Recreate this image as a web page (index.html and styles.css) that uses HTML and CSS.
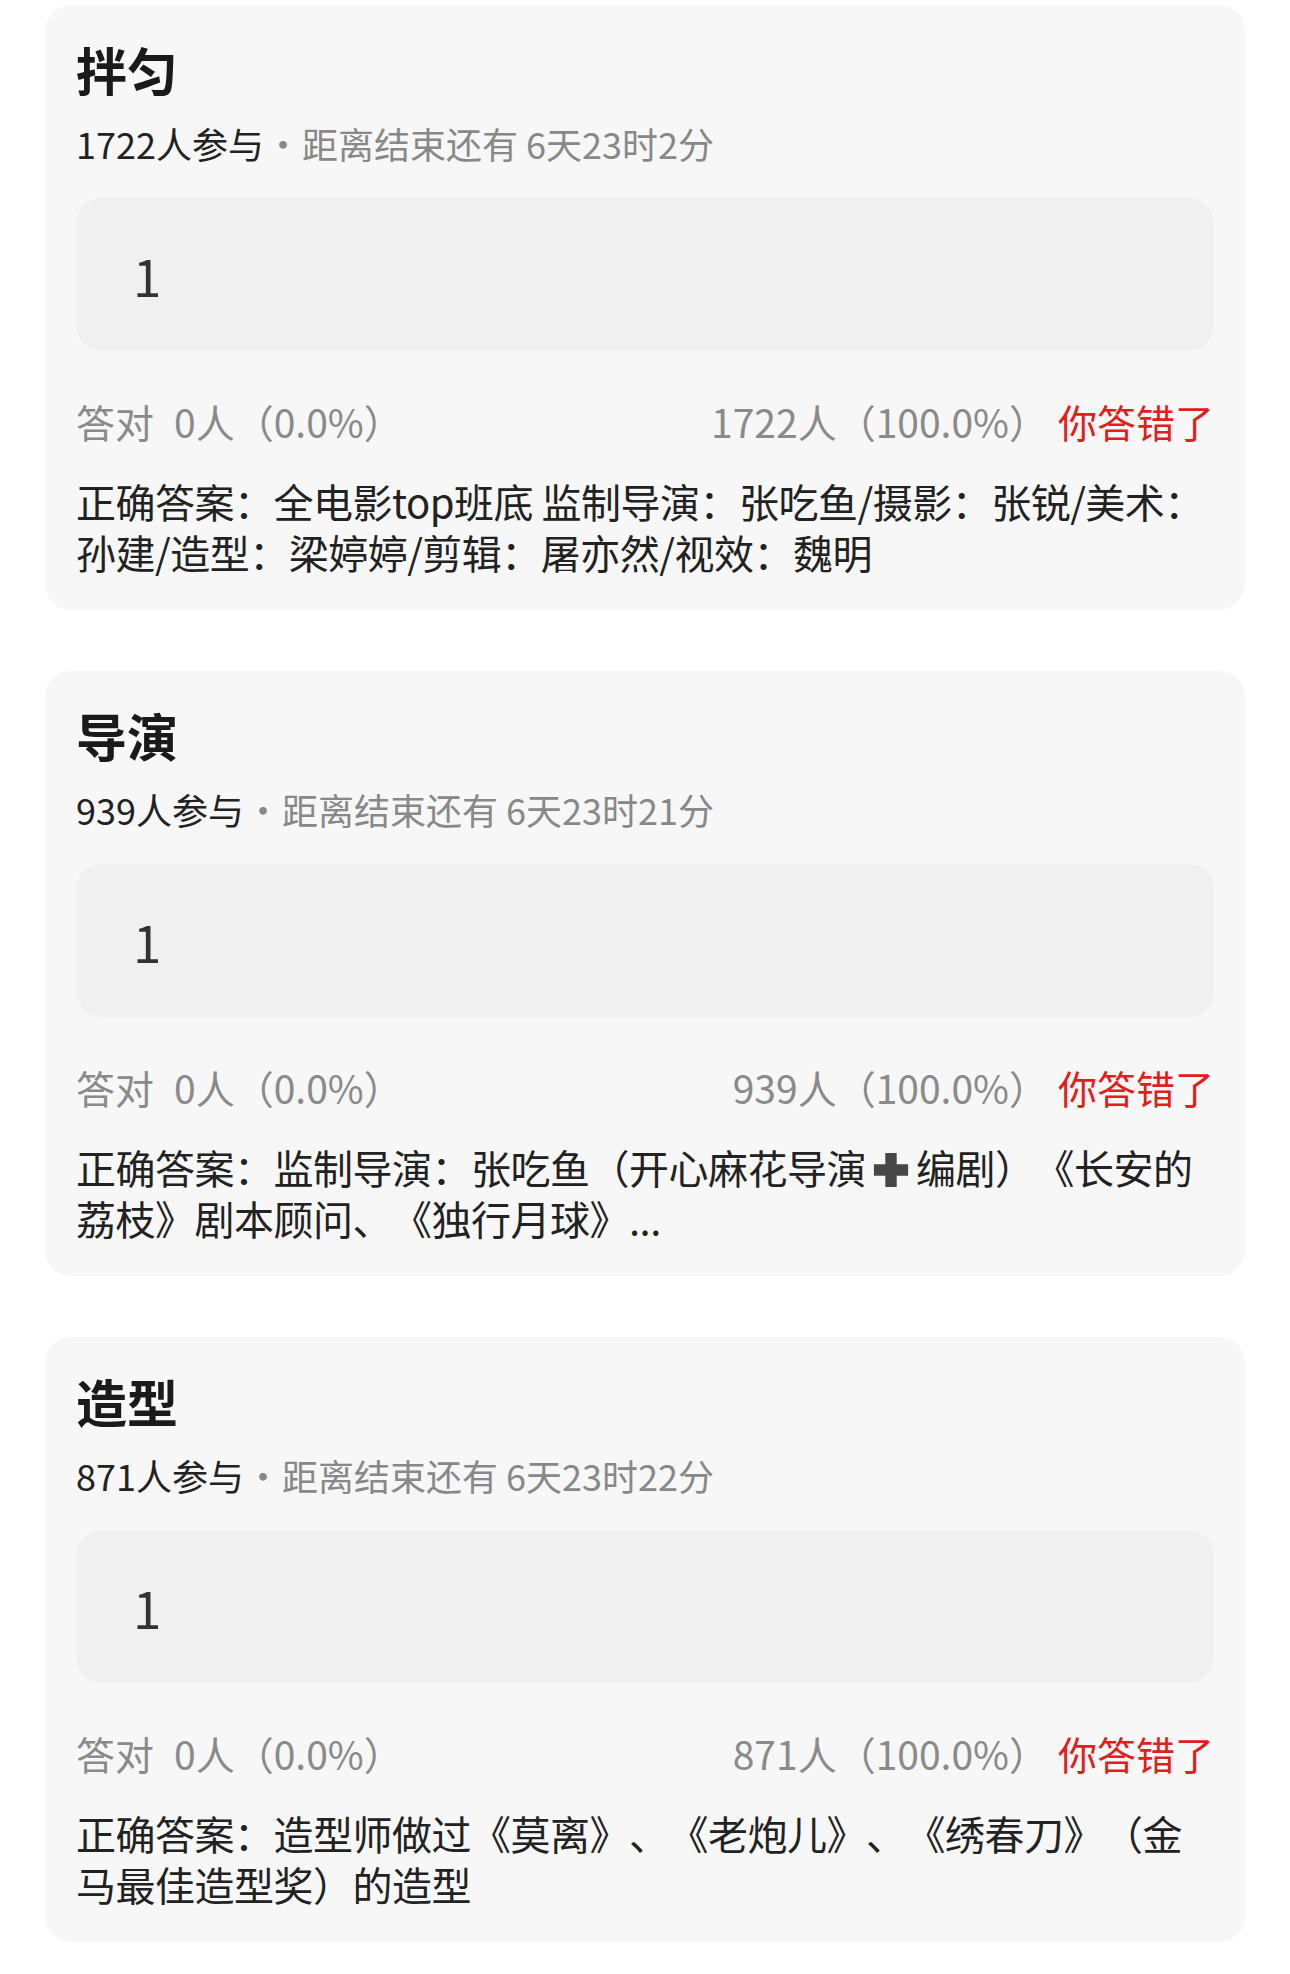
FILE: index.html
```html
<!DOCTYPE html>
<html lang="zh-CN">
<head>
    <meta charset="UTF-8">
    <meta name="viewport" content="width=device-width, initial-scale=1.0">
    <title>竞猜结果</title>
    <link rel="stylesheet" href="styles.css">
</head>
<body>
    <div class="quiz-list">
        <!-- 拌匀 -->
        <div class="quiz-card">
            <h2 class="quiz-title">拌匀</h2>
            <div class="quiz-meta">
                <span class="joined">1722人参与</span><span class="dot">·</span><span>距离结束还有 6天23时2分</span>
            </div>
            <div class="answer-box">1</div>
            <div class="stats">
                <div class="stats-left"><span>答对</span><span>0人（0.0%）</span></div>
                <div class="stats-right"><span>1722人（100.0%）</span><span class="wrong">你答错了</span></div>
            </div>
            <p class="correct">正确答案：全电影top班底 监制导演：张吃鱼/摄影：张锐/美术：孙建/造型：梁婷婷/剪辑：屠亦然/视效：魏明</p>
        </div>

        <!-- 导演 -->
        <div class="quiz-card">
            <h2 class="quiz-title">导演</h2>
            <div class="quiz-meta">
                <span class="joined">939人参与</span><span class="dot">·</span><span>距离结束还有 6天23时21分</span>
            </div>
            <div class="answer-box">1</div>
            <div class="stats">
                <div class="stats-left"><span>答对</span><span>0人（0.0%）</span></div>
                <div class="stats-right"><span>939人（100.0%）</span><span class="wrong">你答错了</span></div>
            </div>
            <p class="correct">正确答案：监制导演：张吃鱼（开心麻花导演<svg class="plus" viewBox="0 0 40 40"><path d="M14 2h12v12h12v12H26v12H14V26H2V14h12z"/></svg>编剧）《长安的荔枝》剧本顾问、《独行月球》...</p>
        </div>

        <!-- 造型 -->
        <div class="quiz-card">
            <h2 class="quiz-title">造型</h2>
            <div class="quiz-meta">
                <span class="joined">871人参与</span><span class="dot">·</span><span>距离结束还有 6天23时22分</span>
            </div>
            <div class="answer-box">1</div>
            <div class="stats">
                <div class="stats-left"><span>答对</span><span>0人（0.0%）</span></div>
                <div class="stats-right"><span>871人（100.0%）</span><span class="wrong">你答错了</span></div>
            </div>
            <p class="correct">正确答案：造型师做过《莫离》、《老炮儿》、《绣春刀》（金马最佳造型奖）的造型</p>
        </div>
    </div>
</body>
</html>
```

FILE: styles.css
```css
body {
    margin: 0;
    background: #ffffff;
    font-family: "Noto Sans CJK SC", "Noto Sans", sans-serif;
    color: #222222;
    text-spacing-trim: space-all;
}

.quiz-list {
    display: flex;
    flex-direction: column;
    gap: 61px;
    padding: 5px 45px 0;
}

.quiz-card {
    background: #f7f7f7;
    border-radius: 26px;
    padding: 33px 31px 32px;
}

.quiz-title {
    margin: 0;
    font-size: 51px;
    line-height: 62px;
    font-weight: 700;
    color: #1a1a1a;
}

.quiz-meta {
    margin-top: 21px;
    font-size: 36px;
    line-height: 44px;
    color: #888888;
}

.quiz-meta .joined {
    color: #222222;
}

.quiz-meta .dot {
    margin: 0 1px;
}

.answer-box {
    margin-top: 33px;
    height: 153px;
    background: #f0f0f0;
    border-radius: 26px;
    display: flex;
    align-items: center;
    padding-left: 57px;
    font-size: 51px;
    color: #333333;
}

.stats {
    margin-top: 45px;
    display: flex;
    justify-content: space-between;
    font-size: 39px;
    line-height: 50px;
    color: #8a8a8a;
}

.stats-left {
    display: flex;
    gap: 20px;
}

.stats-right {
    display: flex;
    gap: 10px;
}

.wrong {
    color: #e0201c;
}

.correct {
    margin: 30px 0 0;
    font-size: 40px;
    line-height: 51px;
    letter-spacing: -0.5px;
    color: #222222;
}

.plus {
    width: 38px;
    height: 38px;
    margin: 0 6px;
    vertical-align: -5px;
    fill: #474747;
}
```
